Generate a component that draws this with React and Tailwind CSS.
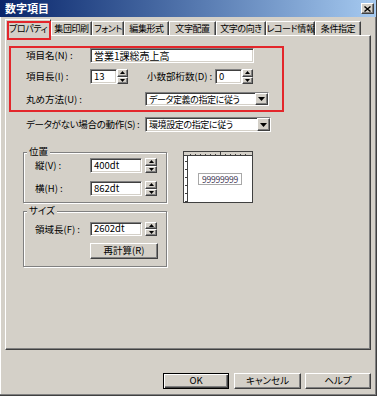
const sunken =
  'bg-white border border-t-[#808080] border-l-[#808080] border-b-white border-r-white shadow-[inset_1px_1px_0_#404040,inset_-1px_-1px_0_#d4d0c8]'
const raised =
  'bg-[#d4d0c8] border border-t-white border-l-white border-b-[#404040] border-r-[#404040] shadow-[inset_-1px_-1px_0_#808080]'

const tabs = [
  { label: 'プロパティ', w: 'w-[46px]' },
  { label: '集団印刷', w: 'w-[41px]' },
  { label: 'フォント', w: 'w-[32px]' },
  { label: '編集形式', w: 'w-[45px]' },
  { label: '文字配置', w: 'w-[47px]' },
  { label: '文字の向き', w: 'w-[50px]' },
  { label: 'レコード情報', w: 'w-[49px]' },
  { label: '条件指定', w: 'w-[46px]' },
]

function Arrow({ up }) {
  return (
    <svg width="5" height="3" viewBox="0 0 5 3" className="block">
      <path d={up ? 'M2.5 0 L5 3 L0 3 Z' : 'M0 0 L5 0 L2.5 3 Z'} fill="#000" />
    </svg>
  )
}

function Spinner({ w = 'w-[11px]' }) {
  return (
    <div className={`flex flex-col h-full ${w}`}>
      <div className={`${raised} flex-1 flex items-center justify-center`}>
        <Arrow up />
      </div>
      <div className={`${raised} flex-1 flex items-center justify-center`}>
        <Arrow />
      </div>
    </div>
  )
}

function Dropdown({ value, w }) {
  return (
    <div className={`${sunken} ${w} h-full flex items-stretch`}>
      <span className="flex-1 pl-[3px] leading-none flex items-center whitespace-nowrap text-[9px] tracking-[-0.4px]">
        {value}
      </span>
      <div className={`${raised} w-[13px] flex items-center justify-center`}>
        <svg width="7" height="4" viewBox="0 0 7 4">
          <path d="M0 0 L7 0 L3.5 4 Z" fill="#000" />
        </svg>
      </div>
    </div>
  )
}

function Group({ title, className, children }) {
  return (
    <div className={`relative border border-[#808080] shadow-[inset_1px_1px_0_#fff,1px_1px_0_#fff] ${className}`}>
      <span className="absolute -top-[6px] left-[3px] px-[2px] bg-[#d4d0c8] leading-none">{title}</span>
      {children}
    </div>
  )
}

function Preview() {
  const topTicks = Array.from({ length: 12 }, (_, i) => 6 + i * 5)
  const sideTicks = Array.from({ length: 6 }, (_, i) => 5 + i * 8)
  return (
    <div className="w-[70px] h-[52px] border border-[#404040] bg-white flex flex-col">
      <svg width="68" height="4" className="block border-b border-[#404040]">
        <rect width="68" height="4" fill="#d4d0c8" />
        {topTicks.map((x) => (
          <rect key={x} x={x} y={x === 36 ? 0 : 2} width="1" height={x === 36 ? 3 : 1} fill="#404040" />
        ))}
      </svg>
      <div className="flex flex-1">
        <svg width="4" height="46" className="block border-r border-[#404040]">
          {sideTicks.map((y) => (
            <rect key={y} x="1" y={y} width="2" height="1" fill="#404040" />
          ))}
        </svg>
        <div className="flex-1 flex items-center justify-center">
          <div className="w-[44px] h-[12px] border border-[#a8a8a8] flex items-center justify-center text-[8.5px] leading-none text-[#3c3450] tracking-[-0.2px]">
            99999999
          </div>
        </div>
      </div>
    </div>
  )
}

export default function App() {
  return (
    <div className="w-[377px] h-[396px] bg-[#d4d0c8] border-r border-b border-[#404040] shadow-[inset_-1px_-1px_0_#808080,inset_1px_1px_0_#fff] flex flex-col text-black text-[9.5px] font-normal font-['MS_UI_Gothic','Noto_Sans_CJK_JP',sans-serif] [font-feature-settings:'palt']">
      {/* title bar */}
      <div className="h-[17px] bg-linear-to-r from-[#0a246a] to-[#a6caf0] flex items-center pl-[5px] pr-[2px]">
        <span className="text-white font-bold text-[11px] leading-none">数字項目</span>
        <div className={`${raised} ml-auto w-[13px] h-[11px] flex items-center justify-center`}>
          <svg width="7" height="6" viewBox="0 0 7 6">
            <path d="M0.5 0.5 L6.5 5.5 M6.5 0.5 L0.5 5.5" stroke="#000" strokeWidth="1.4" />
          </svg>
        </div>
      </div>

      {/* tabs */}
      <div className="flex items-end h-[18px] pl-[5px] text-[9px] tracking-[-0.4px]">
        {tabs.map((t, i) =>
          i === 0 ? (
            <div
              key={t.label}
              className={`relative z-10 ${t.w} h-[17px] -mb-px bg-[#d4d0c8] border-t border-l border-r border-t-white border-l-white border-r-[#404040] flex items-center justify-center leading-none whitespace-nowrap`}
            >
              {t.label}
              <div className="absolute left-[1px] top-[1px] w-[44px] h-[19px] border-2 border-[#e3262b]" />
            </div>
          ) : (
            <div
              key={t.label}
              className={`${t.w} h-[14px] border-t border-l border-r border-t-white border-l-white border-r-[#404040] shadow-[inset_-1px_0_0_#808080] flex items-center justify-center leading-none whitespace-nowrap`}
            >
              {t.label}
            </div>
          )
        )}
      </div>

      {/* panel */}
      <div className="ml-[5px] w-[366px] h-[315px] border border-t-white border-l-white border-b-[#404040] border-r-[#404040] shadow-[inset_-1px_-1px_0_#808080] flex flex-col">
        <div className="ml-[3px] mt-[10px] w-[275px] h-[66px] border-2 border-[#e3262b] flex flex-col">
          <div className="flex items-center h-[15px]">
            <span className="pl-[15px] w-[79px]">項目名(N) :</span>
            <div className={`${sunken} w-[164px] h-full pl-[3px] flex items-center leading-none text-[10px]`}>営業1課総売上高</div>
          </div>
          <div className="flex items-center h-[15px] mt-[6px]">
            <span className="pl-[15px] w-[79px]">項目長(I) :</span>
            <div className={`${sunken} w-[27px] h-full pl-[3px] flex items-center leading-none`}>13</div>
            <Spinner />
            <span className="ml-[19px] w-[68px] whitespace-nowrap">小数部桁数(D) :</span>
            <div className={`${sunken} w-[27px] h-full pl-[3px] flex items-center leading-none`}>0</div>
            <Spinner />
          </div>
          <div className="flex items-center h-[14px] mt-[8px]">
            <span className="pl-[15px] w-[134px]">丸め方法(U) :</span>
            <Dropdown value="データ定義の指定に従う" w="w-[124px]" />
          </div>
        </div>

        <div className="flex items-center h-[15px] mt-[5px]">
          <span className="pl-[20px] w-[139px] whitespace-nowrap tracking-[-0.3px]">データがない場合の動作(S) :</span>
          <Dropdown value="環境設定の指定に従う" w="w-[126px]" />
        </div>

        <div className="flex mt-[19px] ml-[17px]">
          <div className="flex flex-col mt-[1px]">
            <Group title="位置" className="w-[144px] h-[51px] flex flex-col">
              <div className="flex items-center h-[15px] mt-[5px]">
                <span className="pl-[11px] w-[66px]">縦(V) :</span>
                <div className={`${sunken} w-[52px] h-full pl-[3px] flex items-center leading-none`}>400dt</div>
                <div className="ml-[3px] h-full">
                  <Spinner w="w-[12px]" />
                </div>
              </div>
              <div className="flex items-center h-[15px] mt-[8px]">
                <span className="pl-[11px] w-[66px]">横(H) :</span>
                <div className={`${sunken} w-[52px] h-full pl-[3px] flex items-center leading-none`}>862dt</div>
                <div className="ml-[3px] h-full">
                  <Spinner w="w-[12px]" />
                </div>
              </div>
            </Group>
            <Group title="サイズ" className="w-[144px] h-[56px] mt-[8px] flex flex-col">
              <div className="flex items-center h-[14px] mt-[10px]">
                <span className="pl-[11px] w-[66px]">領域長(F) :</span>
                <div className={`${sunken} w-[52px] h-full pl-[3px] flex items-center leading-none`}>2602dt</div>
                <div className="ml-[3px] h-full">
                  <Spinner w="w-[12px]" />
                </div>
              </div>
              <div
                className={`${raised} ml-[66px] mt-[7px] w-[68px] h-[16px] flex items-center justify-center leading-none`}
              >
                再計算(R)
              </div>
            </Group>
          </div>
          <div className="ml-[16px]">
            <Preview />
          </div>
        </div>
      </div>

      {/* buttons */}
      <div className="flex justify-end mt-[23px] pr-[5px]">
        <div className="w-[66px] h-[16px] border border-black shadow-[inset_1px_1px_0_#fff,inset_-1px_-1px_0_#404040,inset_-2px_-2px_0_#808080] flex items-center justify-center leading-none">
          OK
        </div>
        <div className={`${raised} ml-[5px] w-[67px] h-[16px] flex items-center justify-center leading-none`}>
          キャンセル
        </div>
        <div className={`${raised} ml-[4px] w-[66px] h-[16px] flex items-center justify-center leading-none`}>
          ヘルプ
        </div>
      </div>
    </div>
  )
}
